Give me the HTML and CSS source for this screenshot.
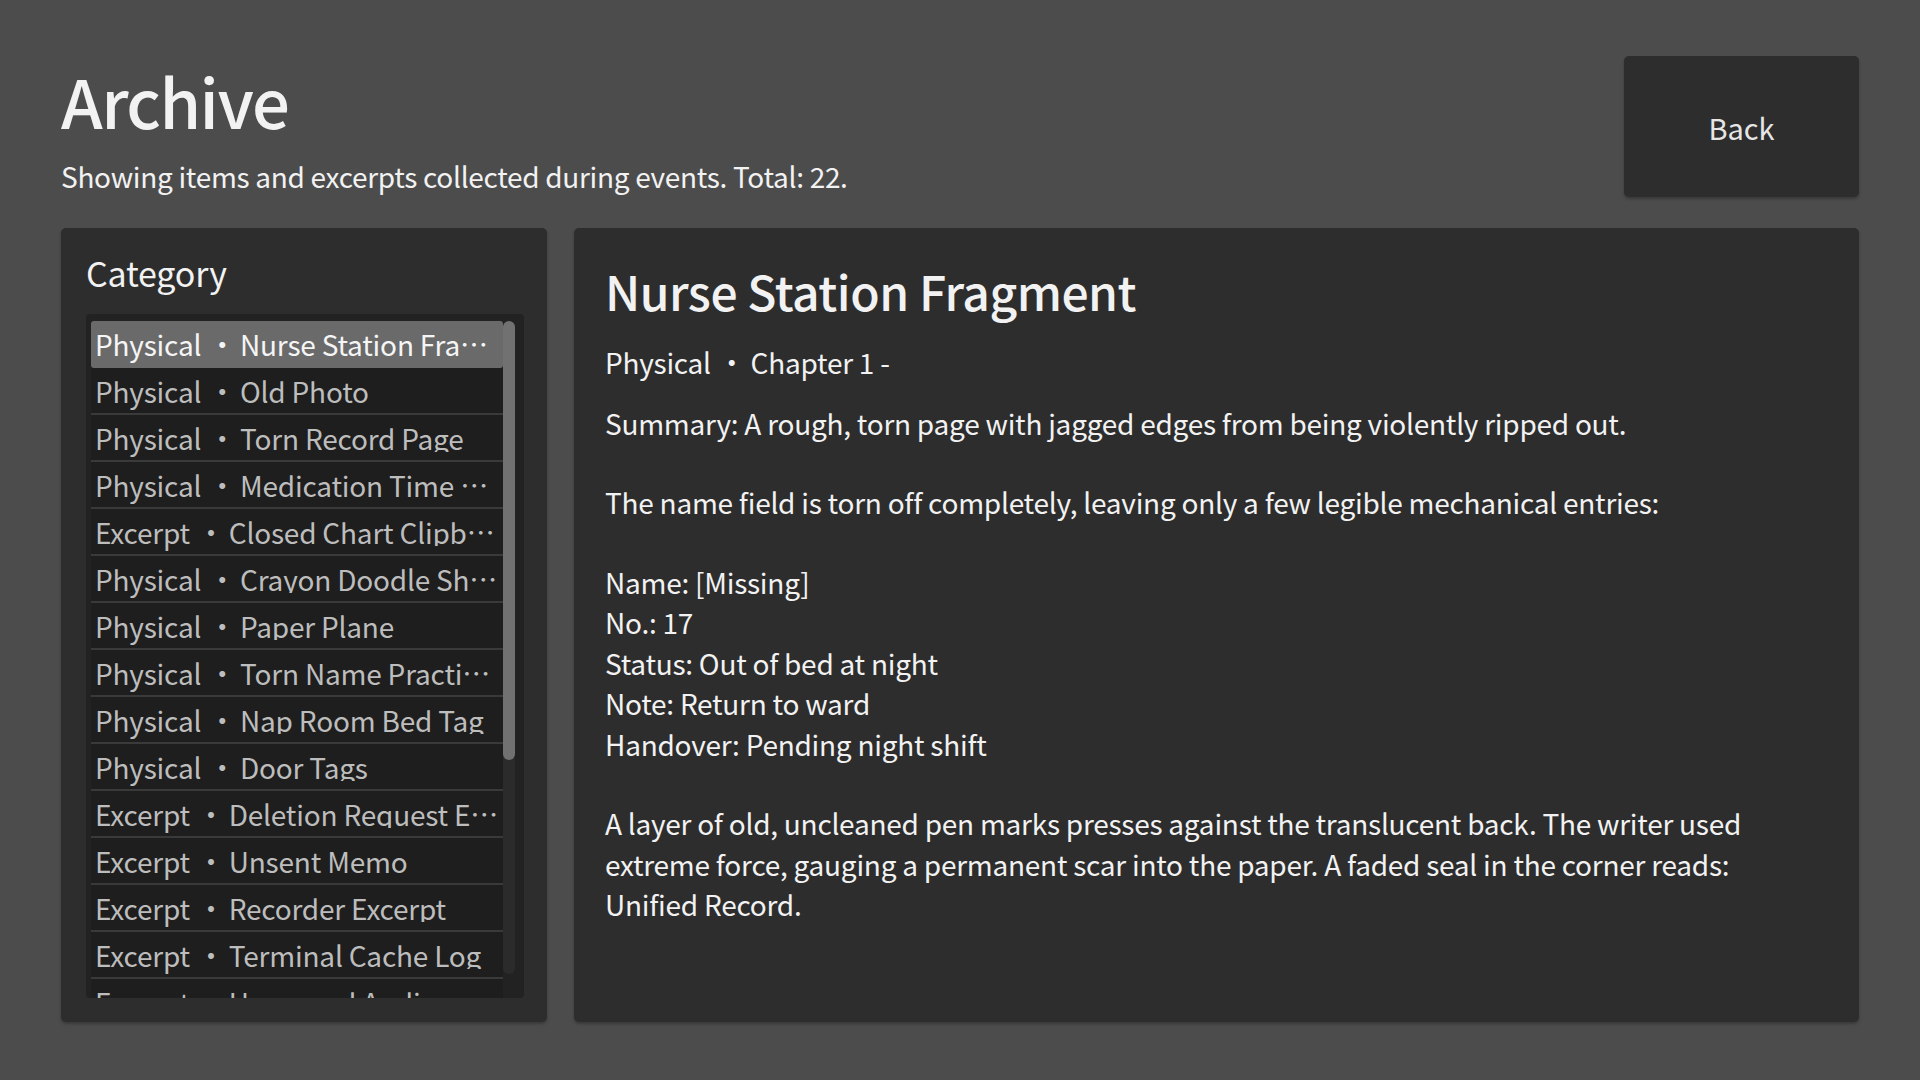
FILE: index.html
```html
<!DOCTYPE html>
<html lang="en">
<head>
<meta charset="utf-8">
<title>Archive</title>
<link rel="stylesheet" href="styles.css">
</head>
<body>
<div class="page">
  <header class="header">
    <div class="heading">
      <h1 class="title">Archive</h1>
      <p class="subtitle">Showing items and excerpts collected during events. Total: 22.</p>
    </div>
    <button class="back">Back</button>
  </header>
  <main class="content">
    <section class="sidebar">
      <h2 class="cat-title">Category</h2>
      <div class="list-wrap">
        <ul class="list">
          <li class="item selected"><span class="kind">Physical</span><span class="dot">•</span><span class="name">Nurse Station Fragment</span></li>
          <li class="item"><span class="kind">Physical</span><span class="dot">•</span><span class="name">Old Photo</span></li>
          <li class="item"><span class="kind">Physical</span><span class="dot">•</span><span class="name">Torn Record Page</span></li>
          <li class="item"><span class="kind">Physical</span><span class="dot">•</span><span class="name">Medication Time Card</span></li>
          <li class="item"><span class="kind">Excerpt</span><span class="dot">•</span><span class="name">Closed Chart Clipboard</span></li>
          <li class="item"><span class="kind">Physical</span><span class="dot">•</span><span class="name">Crayon Doodle Sheet</span></li>
          <li class="item"><span class="kind">Physical</span><span class="dot">•</span><span class="name">Paper Plane</span></li>
          <li class="item"><span class="kind">Physical</span><span class="dot">•</span><span class="name">Torn Name Practice Sheet</span></li>
          <li class="item"><span class="kind">Physical</span><span class="dot">•</span><span class="name">Nap Room Bed Tag</span></li>
          <li class="item"><span class="kind">Physical</span><span class="dot">•</span><span class="name">Door Tags</span></li>
          <li class="item"><span class="kind">Excerpt</span><span class="dot">•</span><span class="name">Deletion Request Email</span></li>
          <li class="item"><span class="kind">Excerpt</span><span class="dot">•</span><span class="name">Unsent Memo</span></li>
          <li class="item"><span class="kind">Excerpt</span><span class="dot">•</span><span class="name">Recorder Excerpt</span></li>
          <li class="item"><span class="kind">Excerpt</span><span class="dot">•</span><span class="name">Terminal Cache Log</span></li>
          <li class="item"><span class="kind">Excerpt</span><span class="dot">•</span><span class="name">Unnamed Audio</span></li>
          <li class="item"><span class="kind">Excerpt</span><span class="dot">•</span><span class="name">Night Shift Notes</span></li>
        </ul>
        <div class="scrollbar"><div class="thumb"></div></div>
      </div>
    </section>
    <section class="detail">
      <h2 class="d-title">Nurse Station Fragment</h2>
      <p class="meta"><span>Physical</span><span class="dot">•</span><span>Chapter 1 -</span></p>
      <div class="body">
        <p>Summary: A rough, torn page with jagged edges from being violently ripped out.</p>
        <p class="gap">The name field is torn off completely, leaving only a few legible mechanical entries:</p>
        <p class="gap">Name: [Missing]<br>No.: 17<br>Status: Out of bed at night<br>Note: Return to ward<br>Handover: Pending night shift</p>
        <p class="gap">A layer of old, uncleaned pen marks presses against the translucent back. The writer used extreme force, gauging a permanent scar into the paper. A faded seal in the corner reads: Unified Record.</p>
      </div>
    </section>
  </main>
</div>
</body>
</html>
```

FILE: styles.css
```css
* { box-sizing: border-box; }
html, body { margin: 0; padding: 0; }
body {
  background: #4c4c4c;
  font-family: "Noto Sans CJK SC", "Noto Sans", sans-serif;
  color: #f2f2f2;
  width: 1920px;
  height: 1080px;
  overflow: hidden;
}
.page {
  padding: 56px 61px 58px 61px;
  height: 1080px;
  display: flex;
  flex-direction: column;
}
.header {
  display: flex;
  justify-content: space-between;
  align-items: flex-start;
  height: 141px;
  margin-bottom: 31px;
}
.title {
  margin: 0;
  font-size: 67px;
  font-weight: 500;
  line-height: 1;
  margin-top: 10px;
  letter-spacing: -1.5px;
}
.subtitle {
  margin: 27px 0 0 0;
  font-size: 28px;
  line-height: 1.2;
  letter-spacing: -0.3px;
}
.back {
  width: 235px;
  height: 141px;
  background: #2d2d2d;
  border: none;
  border-radius: 5px;
  color: #e6e6e6;
  font-family: inherit;
  font-size: 29px;
  box-shadow: 0 2px 3px rgba(0,0,0,0.25);
}
.content {
  flex: 1;
  display: flex;
  gap: 27px;
  min-height: 0;
}
.sidebar {
  width: 486px;
  background: #2d2d2d;
  border-radius: 5px;
  padding: 19px 23px 24px 25px;
  display: flex;
  flex-direction: column;
  box-shadow: 0 2px 3px rgba(0,0,0,0.25);
}
.cat-title {
  margin: 0 0 16px 0;
  font-size: 34px;
  font-weight: 400;
  line-height: 51px;
  color: #f2f2f2;
  letter-spacing: -0.2px;
}
.list-wrap {
  flex: 1;
  min-height: 0;
  background: #222;
  border-radius: 4px;
  padding: 7px 9px 0 5px;
  display: flex;
  overflow: hidden;
}
.list {
  list-style: none;
  margin: 0;
  padding: 0;
  flex: 1;
  min-width: 0;
  overflow: hidden;
}
.item {
  height: 47px;
  display: flex;
  align-items: center;
  padding: 0 0 0 4px;
  font-size: 28px;
  letter-spacing: -0.2px;
  color: #bdbdbd;
  background: #1e1e1e;
  border-bottom: 2px solid #3a3a3a;
  white-space: nowrap;
  overflow: hidden;
  line-height: 1;
}
.item.selected {
  background: #6a6a6a;
  color: #f5f5f5;
  border-radius: 3px;
  border-bottom-color: transparent;
}
.item .kind { flex: none; }
.item .dot { flex: none; margin: 0 4px 0 7px; }
.item .name {
  flex: 1;
  min-width: 0;
  overflow: hidden;
  text-overflow: ellipsis;
}
.scrollbar {
  width: 12px;
  flex: none;
  background: #2b2b2b;
  border-radius: 6px;
  margin-bottom: 24px;
}
.thumb {
  height: 439px;
  background: #717171;
  border-radius: 6px;
}
.detail {
  flex: 1;
  background: #2d2d2d;
  border-radius: 5px;
  padding: 31px 31px;
  box-shadow: 0 2px 3px rgba(0,0,0,0.25);
}
.d-title {
  margin: 0;
  font-size: 48px;
  font-weight: 500;
  line-height: 1.3;
  letter-spacing: -0.5px;
}
.meta {
  margin: 22px 0 0 0;
  font-size: 28px;
  line-height: 1.4;
  letter-spacing: -0.25px;
}
.meta .dot { margin: 0 5px 0 7px; }
.body {
  margin-top: 20px;
  font-size: 28px;
  line-height: 40.5px;
  letter-spacing: -0.25px;
  color: #f2f2f2;
}
.body p { margin: 0; }
.body p.gap { margin-top: 39px; }
```
